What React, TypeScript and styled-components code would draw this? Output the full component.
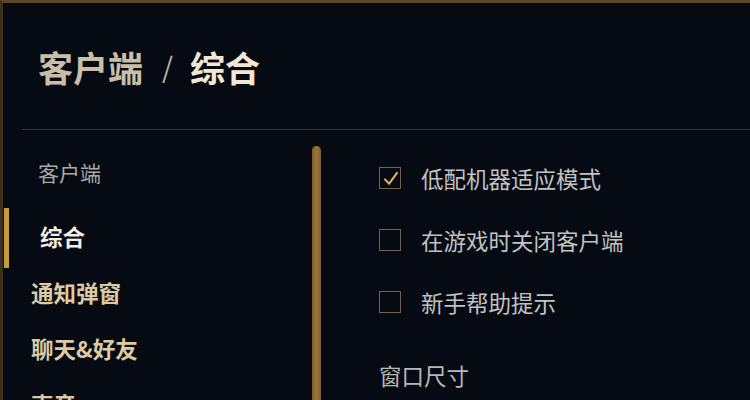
import styled, { createGlobalStyle } from "styled-components";

const GlobalStyle = createGlobalStyle`
  html, body {
    margin: 0;
    padding: 0;
    background: #060a13;
  }
  body {
    font-family: "Noto Sans CJK SC", "Noto Sans", sans-serif;
  }
`;

const Frame = styled.div`
  width: 750px;
  height: 400px;
  box-sizing: border-box;
  border-top: 3px solid #5c4825;
  border-left: 3px solid #3e321f;
  background: #060a13;
  overflow: hidden;
  display: flex;
  flex-direction: column;
`;

const Header = styled.div`
  height: 126px;
  flex-shrink: 0;
  display: flex;
  align-items: center;
  padding-left: 35px;
`;

const Crumb = styled.span<{ $current?: boolean }>`
  font-size: 35px;
  font-weight: 700;
  line-height: 1;
  color: ${(p) => (p.$current ? "#f1e7d4" : "#c9bea8")};
`;

const Slash = styled.span`
  font-size: 28px;
  font-weight: 400;
  color: #bdb4a3;
  margin: 0 17px 0 19px;
  line-height: 1;
`;

const Divider = styled.div`
  height: 1px;
  flex-shrink: 0;
  margin-left: 19px;
  background: #2e323e;
`;

const Body = styled.div`
  flex: 1;
  display: flex;
  min-height: 0;
`;

const Sidebar = styled.nav`
  width: 309px;
  padding-top: 21px;
  display: flex;
  flex-direction: column;
`;

const NavHeading = styled.div`
  height: 42px;
  flex-shrink: 0;
  display: flex;
  align-items: center;
  padding-left: 35px;
  margin-bottom: 15px;
  font-size: 21px;
  font-weight: 400;
  color: #a8a8a8;
`;

const NavItem = styled.div<{ $active?: boolean }>`
  position: relative;
  height: 56px;
  flex-shrink: 0;
  display: flex;
  align-items: center;
  padding-left: ${(p) => (p.$active ? "37px" : "28px")};
  font-size: 22.5px;
  font-weight: 700;
  color: ${(p) => (p.$active ? "#f3ece0" : "#dccaa2")};

  &::before {
    content: "";
    display: ${(p) => (p.$active ? "block" : "none")};
    position: absolute;
    left: 1px;
    top: 0;
    width: 5px;
    height: 60px;
    background: #c99a3f;
  }
`;

const ScrollThumb = styled.div`
  width: 9px;
  flex-shrink: 0;
  margin-top: 16px;
  border-radius: 5px 5px 0 0;
  background: linear-gradient(90deg, #7d5e2c, #9a7538 50%, #7d5e2c);
`;

const Content = styled.section`
  padding: 17px 0 0 58px;
  display: flex;
  flex-direction: column;
`;

const OptionRow = styled.label`
  height: 62px;
  flex-shrink: 0;
  display: flex;
  align-items: center;
  gap: 20px;
  font-size: 22.5px;
  color: #c2c2c2;
`;

const Box = styled.span`
  width: 22px;
  height: 22px;
  box-sizing: border-box;
  border: 1.5px solid #6f6351;
  display: flex;
  align-items: center;
  justify-content: center;
`;

const SectionTitle = styled.div`
  margin-top: 26px;
  height: 32px;
  flex-shrink: 0;
  display: flex;
  align-items: center;
  font-size: 22.5px;
  color: #b7b7b7;
`;

const Check = () => (
  <svg width="19" height="19" viewBox="0 0 22 22">
    <polyline
      points="4.5,12 9.5,17 18.5,4.5"
      fill="none"
      stroke="#e0b55c"
      strokeWidth="2.4"
      strokeLinecap="round"
      strokeLinejoin="round"
    />
  </svg>
);

const Option = ({ label, checked }: { label: string; checked?: boolean }) => (
  <OptionRow>
    <Box>{checked && <Check />}</Box>
    {label}
  </OptionRow>
);

export default function App() {
  return (
    <>
      <GlobalStyle />
      <Frame>
        <Header>
          <Crumb>客户端</Crumb>
          <Slash>/</Slash>
          <Crumb $current>综合</Crumb>
        </Header>
        <Divider />
        <Body>
          <Sidebar>
            <NavHeading>客户端</NavHeading>
            <NavItem $active>综合</NavItem>
            <NavItem>通知弹窗</NavItem>
            <NavItem>聊天&amp;好友</NavItem>
            <NavItem>声音</NavItem>
          </Sidebar>
          <ScrollThumb />
          <Content>
            <Option label="低配机器适应模式" checked />
            <Option label="在游戏时关闭客户端" />
            <Option label="新手帮助提示" />
            <SectionTitle>窗口尺寸</SectionTitle>
          </Content>
        </Body>
      </Frame>
    </>
  );
}
